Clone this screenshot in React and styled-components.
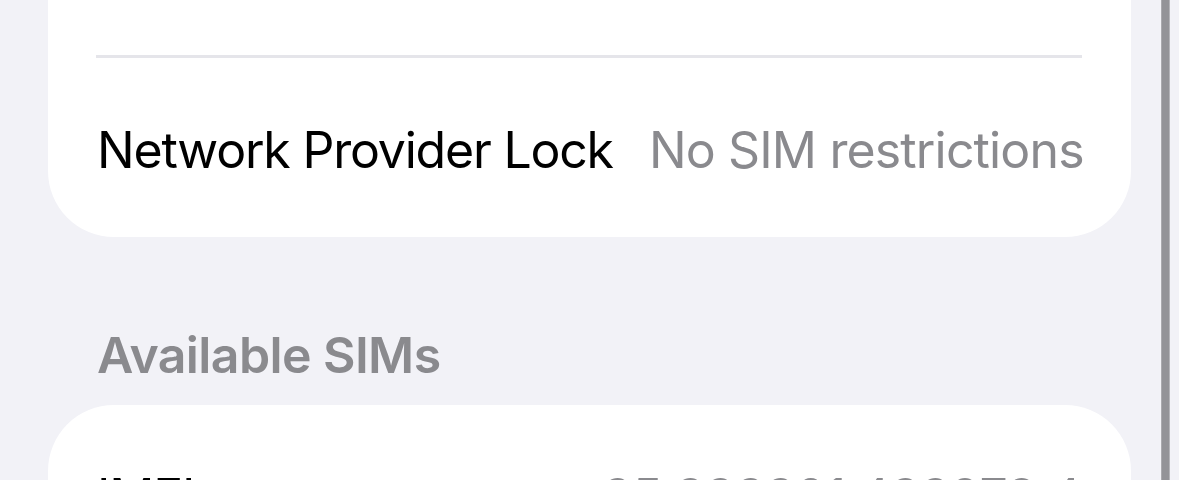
import React from 'react';
import styled, { createGlobalStyle } from 'styled-components';

const GlobalStyle = createGlobalStyle`
  html, body {
    margin: 0;
    padding: 0;
    overflow: hidden;
    background: #f2f2f7;
    font-family: Inter, "Noto Sans", "Liberation Sans", sans-serif;
    -webkit-font-smoothing: antialiased;
  }
`;

const Screen = styled.div`
  position: relative;
  height: 480px;
  overflow: hidden;
  background: #f2f2f7;
`;

const Content = styled.div`
  margin-top: -124px;
  padding: 0 48px;
`;

const Card = styled.div`
  background: #ffffff;
  border-radius: 66px;
  overflow: hidden;
  padding-top: ${props => (props.$scrolled ? '179px' : '0')};
`;

const Row = styled.div`
  display: flex;
  align-items: center;
  justify-content: space-between;
  gap: 36px;
  box-sizing: border-box;
  height: 179px;
  padding: 5px 50px 0 49px;
  font-size: 50px;
  line-height: 62px;
`;

const Divider = styled.div`
  height: 3px;
  margin: 0 49px 0 48px;
  background: #e5e5ea;
`;

const Label = styled.span`
  color: #000000;
  white-space: nowrap;
  letter-spacing: -1.2px;
`;

const Value = styled.span`
  color: #8a8a8e;
  white-space: nowrap;
  letter-spacing: -0.85px;
`;

const SectionHeader = styled.div`
  margin: 87px 0 19px 49px;
  font-size: 50px;
  line-height: 62px;
  font-weight: 600;
  letter-spacing: -0.6px;
  color: #8a8a8e;
`;

const ScrollIndicator = styled.div`
  position: absolute;
  top: 0;
  bottom: 0;
  right: 9px;
  width: 9px;
  background: #939398;
  border-left: 1px solid #a9a9ae;
  border-right: 1px solid #b4b4b9;
  box-sizing: border-box;
`;

// first group is scrolled: the rows above the divider are out of view
const groups = [
  {
    header: null,
    scrolled: true,
    rows: [{ label: 'Network Provider Lock', value: 'No SIM restrictions' }]
  },
  {
    header: 'Available SIMs',
    scrolled: false,
    rows: [
      { label: 'IMEI', value: '35 333301 433278 4' },
      { label: 'EID', value: '' }
    ]
  }
];

const App = () => {
  return (
    <>
      <GlobalStyle />
      <Screen>
        <Content>
          {groups.map((group, gi) => (
            <React.Fragment key={gi}>
              {group.header && <SectionHeader>{group.header}</SectionHeader>}
              <Card $scrolled={group.scrolled}>
                {group.rows.map((row, ri) => (
                  <React.Fragment key={row.label}>
                    {(ri > 0 || group.scrolled) && <Divider />}
                    <Row>
                      <Label>{row.label}</Label>
                      <Value>{row.value}</Value>
                    </Row>
                  </React.Fragment>
                ))}
              </Card>
            </React.Fragment>
          ))}
        </Content>
        <ScrollIndicator />
      </Screen>
    </>
  );
};

export default App;
